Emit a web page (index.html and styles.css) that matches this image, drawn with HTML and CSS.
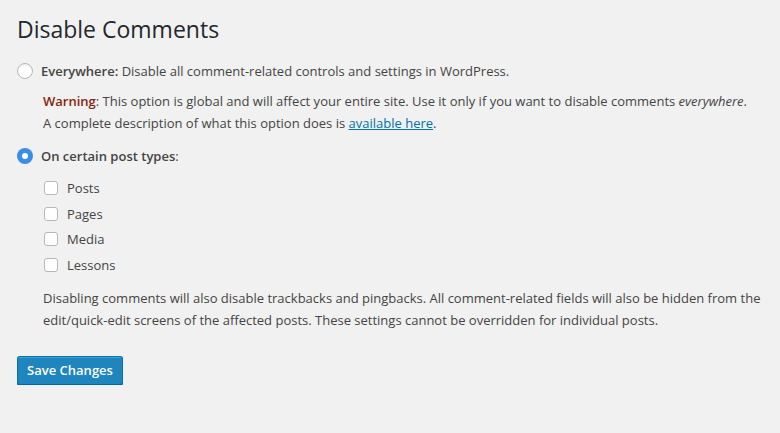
FILE: index.html
```html
<!DOCTYPE html>
<html>
<head>
<meta charset="utf-8">
<link rel="stylesheet" href="styles.css">
</head>
<body>
<div class="wrap">
  <h1 class="title">Disable Comments</h1>
  <div class="option">
    <span class="radio"></span>
    <span class="label"><strong>Everywhere:</strong> Disable all comment-related controls and settings in WordPress.</span>
  </div>
  <p class="indent warning-text"><strong class="warn">Warning</strong>: This option is global and will affect your entire site. Use it only if you want to disable comments <em>everywhere</em>.<br>A complete description of what this option does is <a href="#">available here</a>.</p>
  <div class="option option-2">
    <span class="radio checked"></span>
    <span class="label"><strong>On certain post types</strong>:</span>
  </div>
  <ul class="types">
    <li><span class="checkbox"></span>Posts</li>
    <li><span class="checkbox"></span>Pages</li>
    <li><span class="checkbox"></span>Media</li>
    <li><span class="checkbox"></span>Lessons</li>
  </ul>
  <p class="indent desc">Disabling comments will also disable trackbacks and pingbacks. All comment-related fields will also be hidden from the edit/quick-edit screens of the affected posts. These settings cannot be overridden for individual posts.</p>
  <button class="button">Save Changes</button>
</div>
</body>
</html>
```
FILE: styles.css
```css
html, body {
  margin: 0;
  padding: 0;
  background: #f1f1f1;
}
body {
  font-family: "Open Sans", sans-serif;
  font-size: 13px;
  color: #444;
}
.wrap {
  padding: 9px 17px 0 17px;
}
.title {
  font-size: 23px;
  font-weight: 400;
  color: #23282d;
  margin: 0;
  line-height: 40px;
}
.option {
  display: flex;
  align-items: center;
  margin-top: 12px;
  height: 20px;
}
.option strong {
  font-weight: 600;
}
.label {
  margin-left: 8px;
}
.radio {
  width: 14px;
  height: 14px;
  border: 1px solid #b4b9be;
  border-radius: 50%;
  background: #fff;
  box-shadow: inset 0 1px 2px rgba(0,0,0,0.07);
}
.radio.checked {
  width: 16px;
  height: 16px;
  border: none;
  background: #3a8ee6;
  position: relative;
  box-shadow: none;
}
.radio.checked::after {
  content: "";
  position: absolute;
  left: 5px;
  top: 5px;
  width: 6px;
  height: 6px;
  border-radius: 50%;
  background: #fff;
}
.indent {
  margin: 0 0 0 26px;
  line-height: 22px;
}
.warning-text {
  margin-top: 9px;
}
.warn {
  color: #8a1f11;
  font-weight: 600;
}
a {
  color: #0073aa;
}
.option-2 {
  margin-top: 12px;
}
.types {
  list-style: none;
  margin: 9px 0 0 27px;
  padding: 0;
}
.types li {
  display: flex;
  align-items: center;
  height: 25.7px;
}
.checkbox {
  width: 14px;
  height: 14px;
  box-sizing: border-box;
  border: 1px solid #b4b9be;
  border-radius: 3px;
  background: #fff;
  margin-right: 9px;
}
.desc {
  margin-top: 9px;
}
.button {
  margin-top: 25px;
  font-family: "Open Sans", sans-serif;
  font-size: 13px;
  font-weight: 600;
  color: #fff;
  background: #1e85be;
  border: 1px solid #0073aa;
  border-bottom-color: #006799;
  border-radius: 3px;
  height: 29px;
  width: 106px;
  padding: 0;
  box-shadow: inset 0 1px 0 rgba(120,200,230,0.4), 0 1px 0 #006799;
}
```
